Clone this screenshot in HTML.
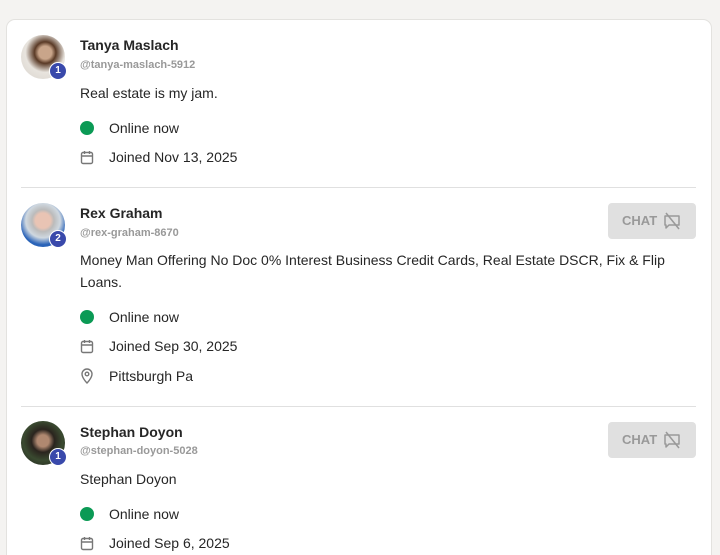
<!DOCTYPE html>
<html style="overflow:hidden;height:555px"><head><style>
body{margin:0;width:720px;height:555px;background:#f4f3f1;font-family:"Liberation Sans",Roboto,sans-serif;overflow:hidden;position:relative}
.card{position:absolute;left:6px;top:19px;width:704px;height:545px;background:#fff;border:1px solid #e3e2df;border-radius:9px}
.av{position:absolute;left:21px;width:44px;height:44px;border-radius:50%;overflow:hidden}
.badge{position:absolute;width:16px;height:16px;border-radius:50%;background:#3949ab;color:#fff;font-size:10px;font-weight:bold;text-align:center;line-height:16px;border:1px solid #fff;box-sizing:content-box}
.name{position:absolute;left:80px;font-size:14px;font-weight:bold;color:#262626}
.handle{position:absolute;left:80px;top:0;font-size:11px;font-weight:bold;color:#999}
.txt{position:absolute;left:80px;font-size:14px;color:#262626;line-height:22px;width:610px}
.row{position:absolute;left:109px;font-size:14px;color:#262626}
.dot{position:absolute;left:80px;width:14px;height:14px;border-radius:50%;background:#0b9a55}
.ic{position:absolute;left:80px}
.hr{position:absolute;left:21px;width:675px;height:1px;background:#e0e0e0}
.chat{position:absolute;left:608px;width:88px;height:36px;background:#e0e0e0;border-radius:4px;color:#999;font-size:13px;font-weight:bold}
.chat span{position:absolute;left:14px;top:10px}
.chat svg{position:absolute;left:54px;top:9px}
</style></head><body>
<div class="card"></div>

<div class="av" style="top:35px;background:radial-gradient(circle at 55% 40%,#c9a58a 0 18%,#5a3a26 30%,#e8e4de 55%,#d8d3cc)"></div>
<div class="badge" style="left:49px;top:62px">1</div>
<div class="name" style="top:37px">Tanya Maslach</div>
<div class="handle" style="top:59px">@tanya-maslach-5912</div>
<div class="txt" style="top:82px">Real estate is my jam.</div>
<div class="dot" style="top:121px"></div><div class="row" style="top:120px">Online now</div>
<svg class="ic" style="top:150px" width="14" height="15" viewBox="0 0 14 15"><rect x="1.5" y="2.5" width="11" height="11" rx="1.5" fill="none" stroke="#777" stroke-width="1.4"/><path d="M1.5 6h11M4.5 1v3M9.5 1v3" stroke="#777" stroke-width="1.4"/></svg>
<div class="row" style="top:149px">Joined Nov 13, 2025</div>
<div class="hr" style="top:187px"></div>

<div class="av" style="top:203px;background:radial-gradient(circle at 50% 40%,#e9c4b4 0 22%,#bbb 32%,#cfd8e0 50%,#2a63b8 70%)"></div>
<div class="badge" style="left:49px;top:230px">2</div>
<div class="name" style="top:205px">Rex Graham</div>
<div class="handle" style="top:227px">@rex-graham-8670</div>
<div class="chat" style="top:203px"><span>CHAT</span><svg width="20" height="18" viewBox="0 0 20 18"><path d="M3 4h14v9H7l-3 3v-3H3z" fill="none" stroke="#999" stroke-width="1.5" stroke-linejoin="round"/><path d="M4 1l13 16" stroke="#999" stroke-width="1.5"/></svg></div>
<div class="txt" style="top:249px">Money Man Offering No Doc 0% Interest Business Credit Cards, Real Estate DSCR, Fix &amp; Flip Loans.</div>
<div class="dot" style="top:310px"></div><div class="row" style="top:309px">Online now</div>
<svg class="ic" style="top:339px" width="14" height="15" viewBox="0 0 14 15"><rect x="1.5" y="2.5" width="11" height="11" rx="1.5" fill="none" stroke="#777" stroke-width="1.4"/><path d="M1.5 6h11M4.5 1v3M9.5 1v3" stroke="#777" stroke-width="1.4"/></svg>
<div class="row" style="top:338px">Joined Sep 30, 2025</div>
<svg class="ic" style="top:368px" width="14" height="16" viewBox="0 0 14 16"><path d="M7 15s5-5 5-9a5 5 0 0 0-10 0c0 4 5 9 5 9z" fill="none" stroke="#777" stroke-width="1.4"/><circle cx="7" cy="6" r="1.8" fill="none" stroke="#777" stroke-width="1.4"/></svg>
<div class="row" style="top:368px">Pittsburgh Pa</div>
<div class="hr" style="top:406px"></div>

<div class="av" style="top:421px;background:radial-gradient(circle at 50% 45%,#b08870 0 18%,#2a241e 35%,#3a4a30 60%,#1e1e1a)"></div>
<div class="badge" style="left:49px;top:448px">1</div>
<div class="name" style="top:424px">Stephan Doyon</div>
<div class="handle" style="top:445px">@stephan-doyon-5028</div>
<div class="chat" style="top:422px"><span>CHAT</span><svg width="20" height="18" viewBox="0 0 20 18"><path d="M3 4h14v9H7l-3 3v-3H3z" fill="none" stroke="#999" stroke-width="1.5" stroke-linejoin="round"/><path d="M4 1l13 16" stroke="#999" stroke-width="1.5"/></svg></div>
<div class="txt" style="top:468px">Stephan Doyon</div>
<div class="dot" style="top:507px"></div><div class="row" style="top:506px">Online now</div>
<svg class="ic" style="top:536px" width="14" height="15" viewBox="0 0 14 15"><rect x="1.5" y="2.5" width="11" height="11" rx="1.5" fill="none" stroke="#777" stroke-width="1.4"/><path d="M1.5 6h11M4.5 1v3M9.5 1v3" stroke="#777" stroke-width="1.4"/></svg>
<div class="row" style="top:535px">Joined Sep 6, 2025</div>
</body></html>
